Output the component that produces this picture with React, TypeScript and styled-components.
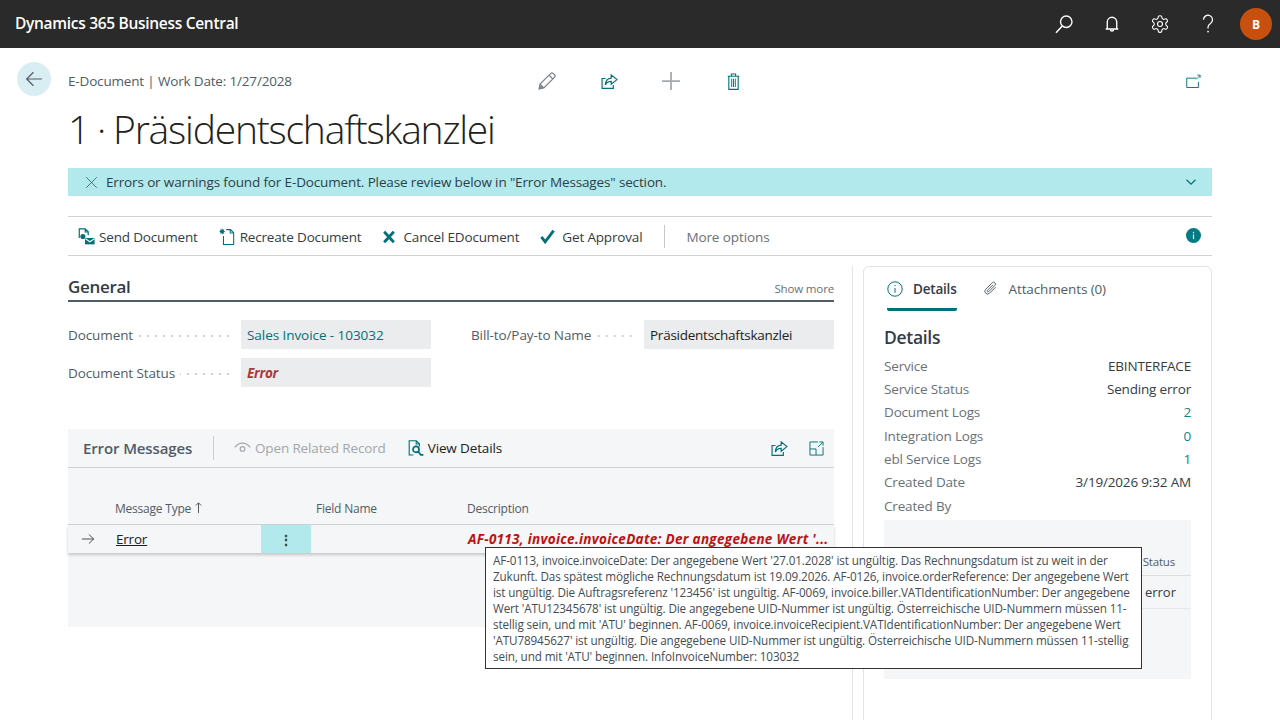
import React from 'react';
import styled, { createGlobalStyle } from 'styled-components';

const GlobalStyle = createGlobalStyle`
  html, body {
    margin: 0;
    padding: 0;
    background: #fff;
    overflow: hidden;
  }
  body {
    font-family: 'Open Sans', 'Noto Sans', sans-serif;
    font-size: 14px;
    color: #212121;
  }
`;

const teal = '#00707a';
const lightTeal = '#0a858f';

const Shell = styled.div`
  width: 1280px;
  height: 720px;
  overflow: hidden;
`;

const TopBar = styled.header`
  height: 48px;
  background: #2a2a2a;
  display: flex;
  align-items: center;
  padding-left: 15px;
  color: #fff;
`;

const Brand = styled.div`
  font-size: 15.5px;
  font-weight: 600;
  letter-spacing: -0.3px;
  flex: 1;
  padding-bottom: 3px;
`;

const TopIcon = styled.div`
  width: 48px;
  height: 48px;
  display: flex;
  align-items: center;
  justify-content: center;
`;

const Avatar = styled.div`
  width: 32px;
  height: 32px;
  border-radius: 50%;
  background: #c8500f;
  color: #fff;
  font-size: 12px;
  font-weight: 700;
  display: flex;
  align-items: center;
  justify-content: center;
  margin: 0 8px;
`;

const Page = styled.div`
  display: grid;
  grid-template-columns: 68px 1144px;
`;

const BackButton = styled.div`
  width: 34px;
  height: 34px;
  border-radius: 50%;
  background: #d9eef3;
  margin: 14px 0 0 17px;
  display: flex;
  align-items: center;
  justify-content: center;
`;

const Main = styled.main`
  min-width: 0;
`;

const CaptionRow = styled.div`
  display: flex;
  align-items: center;
  height: 34px;
  margin-top: 16px;
`;

const Caption = styled.div`
  width: 448px;
  font-size: 13.5px;
  letter-spacing: -0.17px;
  color: #505c6a;
`;

const CaptionIcon = styled.div<{ $end?: boolean }>`
  width: ${p => (p.$end ? 38 : 62)}px;
  display: flex;
  justify-content: center;
  margin-left: ${p => (p.$end ? 'auto' : 0)};
`;

const Title = styled.h1`
  margin: 5px 0 0;
  font-size: 39px;
  line-height: 52px;
  font-weight: 300;
  letter-spacing: -1.2px;
  word-spacing: -1px;
  color: #212121;
`;

const Banner = styled.div`
  margin-top: 13px;
  height: 28px;
  background: #b2e9ec;
  display: flex;
  align-items: center;
  padding: 0 15px 0 17px;
  gap: 8px;
  font-size: 13.5px;
  letter-spacing: -0.14px;
  color: #2f3e48;
`;

const BannerText = styled.span`
  flex: 1;
`;

const ActionBar = styled.div`
  margin-top: 20px;
  height: 40px;
  box-sizing: border-box;
  border-top: 1px solid #d0d2d5;
  border-bottom: 1px solid #d0d2d5;
  display: flex;
  align-items: center;
  padding: 0 10px;
`;

const ActionItem = styled.div<{ $gap?: number }>`
  display: flex;
  align-items: center;
  gap: ${p => p.$gap ?? 4}px;
  margin-right: 21px;
  font-size: 13.5px;
  letter-spacing: -0.17px;
  color: #333c46;
  line-height: 18px;
  padding-top: 1px;
`;

const ActionDivider = styled.div`
  width: 1px;
  height: 23px;
  background: #c4c7ca;
  margin-left: 1px;
  margin-right: 21px;
`;

const MoreOptions = styled.div`
  flex: 1;
  font-size: 13.5px;
  letter-spacing: -0.1px;
  color: #68717c;
  padding-top: 1px;
`;

const Content = styled.div`
  display: flex;
  margin-top: 10px;
  height: 454px;
`;

const LeftColumn = styled.div`
  width: 785px;
  box-sizing: border-box;
  border-right: 1px solid #e1e3e6;
  padding-right: 18px;
`;

const SectionHead = styled.div`
  margin-top: 10px;
  height: 24px;
  box-sizing: content-box;
  border-bottom: 2px solid #505c6a;
  display: flex;
  align-items: center;
  justify-content: space-between;
`;

const SectionTitle = styled.h2`
  margin: 0 0 3px;
  font-size: 17px;
  font-weight: 600;
  letter-spacing: -0.3px;
  color: #333c46;
`;

const ShowMore = styled.span`
  font-size: 11.5px;
  letter-spacing: -0.15px;
  color: #68717c;
`;

const FieldGrid = styled.div`
  display: grid;
  grid-template-columns: 363px 363px;
  column-gap: 40px;
  row-gap: 9px;
  margin-top: 18px;
`;

const Field = styled.div`
  display: flex;
  align-items: center;
  height: 29px;
`;

const FieldLabel = styled.span`
  font-size: 13.5px;
  letter-spacing: -0.1px;
  color: #505c6a;
  white-space: nowrap;
`;

const Dots = styled.span`
  flex: 1;
  height: 2px;
  margin: 2px 9px 0 5px;
  background-image: radial-gradient(circle, #d0d3d6 1px, transparent 1px);
  background-size: 8px 2px;
  background-position: right;
`;

const FieldValue = styled.div<{ $tone?: 'link' | 'error' }>`
  width: 190px;
  height: 29px;
  box-sizing: border-box;
  background: #ebecee;
  padding: 0 6px;
  display: flex;
  align-items: center;
  font-size: 13.5px;
  letter-spacing: ${p => (p.$tone === 'link' ? -0.06 : -0.25)}px;
  color: ${p => (p.$tone === 'link' ? teal : p.$tone === 'error' ? '#a83a3a' : '#212121')};
  font-weight: ${p => (p.$tone === 'error' ? 700 : 400)};
  font-style: ${p => (p.$tone === 'error' ? 'italic' : 'normal')};
`;

const ErrorPart = styled.section`
  margin-top: 42px;
  background: #f5f6f7;
  height: 198px;
`;

const PartBar = styled.div`
  height: 39px;
  box-sizing: border-box;
  border-bottom: 1px solid #cfd1d4;
  display: flex;
  align-items: center;
  padding-left: 15px;
`;

const PartTitle = styled.h3`
  margin: 0;
  width: 130px;
  font-size: 15px;
  font-weight: 600;
  letter-spacing: -0.12px;
  color: #505c6a;
`;

const PartDivider = styled.div`
  width: 1px;
  height: 24px;
  background: #ccced1;
  margin-right: 20px;
`;

const PartAction = styled.div<{ $disabled?: boolean }>`
  display: flex;
  align-items: center;
  gap: 4px;
  margin-right: 22px;
  font-size: 13.5px;
  letter-spacing: -0.14px;
  color: ${p => (p.$disabled ? '#a3a7ac' : '#212121')};
`;

const PartIcons = styled.div`
  margin-left: auto;
  display: flex;
  align-items: center;
  gap: 21px;
  padding-right: 10px;
`;

const TableRow = styled.div<{ $head?: boolean }>`
  display: grid;
  grid-template-columns: 47px 146px 50px 156px 1fr;
  position: relative;
  height: ${p => (p.$head ? 57 : 28)}px;
  box-sizing: border-box;
  align-items: ${p => (p.$head ? 'end' : 'center')};
  ${p => (p.$head ? 'border-bottom: 1px solid #cfd1d4; padding-bottom: 7px;' : 'box-shadow: 0 2px 3px rgba(0,0,0,0.2);')}
`;

const HeadCell = styled.div<{ $inset?: number }>`
  font-size: 12px;
  letter-spacing: -0.22px;
  color: #505c6a;
  padding-left: ${p => p.$inset ?? 0}px;
  white-space: nowrap;
`;

const ArrowCell = styled.div`
  display: flex;
  justify-content: center;
  padding-right: 7px;
`;

const TypeCell = styled.div`
  padding-left: 1px;
  font-size: 13.5px;
  letter-spacing: -0.2px;
  text-decoration: underline;
  color: #212121;
`;

const MenuCell = styled.div`
  height: 28px;
  background: #b2e9ec;
  display: flex;
  align-items: center;
  justify-content: center;
  font-weight: 700;
  color: #333c46;
`;

const DescCell = styled.div`
  grid-column: 5;
  font-size: 13.5px;
  font-weight: 700;
  font-style: italic;
  letter-spacing: 0.3px;
  color: #c01010;
  white-space: nowrap;
  padding-left: 1px;
`;

const Tooltip = styled.div`
  position: absolute;
  left: 417px;
  top: 22px;
  width: 657px;
  height: 122px;
  box-sizing: border-box;
  background: #fff;
  border: 1px solid #333;
  padding: 4px 7px;
  font-size: 11.7px;
  line-height: 16px;
  letter-spacing: -0.12px;
  color: #444c55;
  z-index: 10;
`;

const TooltipLine = styled.div`
  white-space: nowrap;
`;

const SideCard = styled.aside`
  margin-left: 10px;
  width: 349px;
  height: 470px;
  box-sizing: border-box;
  border: 1px solid #e1e3e6;
  border-radius: 6px 6px 0 0;
  padding: 0 20px;
`;

const Tabs = styled.div`
  display: flex;
  gap: 26px;
  padding-left: 3px;
`;

const Tab = styled.div<{ $active?: boolean }>`
  height: 44px;
  box-sizing: border-box;
  padding-top: 2px;
  display: flex;
  align-items: center;
  gap: ${p => (p.$active ? 10 : 11)}px;
  font-size: 13.5px;
  letter-spacing: ${p => (p.$active ? -0.2 : -0.12)}px;
  font-weight: ${p => (p.$active ? 600 : 400)};
  color: ${p => (p.$active ? '#333c46' : '#505c6a')};
  border-bottom: 3px solid ${p => (p.$active ? teal : 'transparent')};
  border-radius: 0 0 2px 2px;
`;

const DetailsTitle = styled.h2`
  margin: 14px 0 5px;
  font-size: 17.5px;
  line-height: 24px;
  font-weight: 600;
  letter-spacing: -0.3px;
  color: #333c46;
`;

const DetailRow = styled.div`
  display: flex;
  justify-content: space-between;
  align-items: center;
  height: 23.33px;
  font-size: 13.5px;
  letter-spacing: -0.17px;
`;

const DetailLabel = styled.span`
  color: #68717c;
`;

const DetailValue = styled.span<{ $link?: boolean }>`
  color: ${p => (p.$link ? lightTeal : '#333c46')};
`;

const LogBox = styled.div`
  margin-top: 3px;
  height: 159px;
  background: #f5f6f7;
`;

const LogHead = styled.div`
  height: 56px;
  box-sizing: border-box;
  border-bottom: 1px solid #dcdee1;
  display: flex;
  align-items: flex-end;
  justify-content: flex-end;
  padding: 0 16px 6px 0;
  font-size: 11.5px;
  letter-spacing: -0.2px;
  color: #505c6a;
`;

const LogCell = styled.div`
  height: 33px;
  box-sizing: border-box;
  border-bottom: 1px solid #e6e7e9;
  display: flex;
  align-items: center;
  justify-content: flex-end;
  padding-right: 15px;
  font-size: 13px;
  color: #333c46;
`;

type IconProps = { color?: string; size?: number };

const Svg: React.FC<React.PropsWithChildren<IconProps>> = ({ children, size = 16, color = 'currentColor' }) => (
  <svg width={size} height={size} viewBox="0 0 16 16" fill="none" stroke={color} strokeWidth="1">
    {children}
  </svg>
);

const SearchIcon = () => (
  <Svg size={20} color="#fff">
    <circle cx="9.8" cy="6.2" r="4.6" strokeWidth="1.1" />
    <path d="M6.6 9.6 1.6 15" strokeWidth="1.2" />
  </Svg>
);

const BellIcon = () => (
  <Svg size={18} color="#fff">
    <path d="M3.8 12.4V6.2a4.2 4.2 0 0 1 8.4 0v6.2M2.4 12.4h11.2M6.6 12.8a1.4 1.4 0 0 0 2.8 0" strokeWidth="1.2" />
  </Svg>
);

const GearIcon = () => (
  <svg width="20" height="20" viewBox="0 0 24 24" fill="none" stroke="#fff" strokeWidth="1.3">
    <path d="M12.22 2h-.44a2 2 0 0 0-2 2v.18a2 2 0 0 1-1 1.73l-.43.25a2 2 0 0 1-2 0l-.15-.08a2 2 0 0 0-2.73.73l-.22.38a2 2 0 0 0 .73 2.73l.15.1a2 2 0 0 1 1 1.72v.51a2 2 0 0 1-1 1.74l-.15.09a2 2 0 0 0-.73 2.73l.22.38a2 2 0 0 0 2.73.73l.15-.08a2 2 0 0 1 2 0l.43.25a2 2 0 0 1 1 1.73V20a2 2 0 0 0 2 2h.44a2 2 0 0 0 2-2v-.18a2 2 0 0 1 1-1.73l.43-.25a2 2 0 0 1 2 0l.15.08a2 2 0 0 0 2.73-.73l.22-.39a2 2 0 0 0-.73-2.73l-.15-.08a2 2 0 0 1-1-1.74v-.5a2 2 0 0 1 1-1.74l.15-.09a2 2 0 0 0 .73-2.73l-.22-.38a2 2 0 0 0-2.73-.73l-.15.08a2 2 0 0 1-2 0l-.43-.25a2 2 0 0 1-1-1.73V4a2 2 0 0 0-2-2z" />
    <circle cx="12" cy="12" r="3" />
  </svg>
);

const HelpIcon = () => (
  <Svg size={20} color="#fff">
    <path d="M4.4 4.6a3.6 3.6 0 1 1 5.6 3c-1.3.9-2 1.5-2 3v.9" strokeWidth="1" />
    <circle cx="8" cy="14" r=".7" fill="#fff" stroke="none" />
  </Svg>
);

const BackIcon = () => (
  <Svg size={18} color="#505c6a">
    <path d="M15 8H1.5M7.5 2 1.5 8l6 6" strokeWidth="1.1" />
  </Svg>
);

const PencilIcon = () => (
  <Svg size={18} color="#7a828b">
    <path d="M11.2 1.4a1.7 1.7 0 0 1 2.4 0l1 1a1.7 1.7 0 0 1 0 2.4L5.2 14.2 1 15l.8-4.2zM9.8 2.8l3.4 3.4M1.8 10.8l3.4 3.4" strokeWidth="1.1" />
    <path d="M1.2 15l1-3.2 2.2 2.2z" fill="#7a828b" stroke="none" />
  </Svg>
);

const ShareIcon = ({ color = teal }: IconProps) => (
  <Svg size={17} color={color}>
    <path d="M11.6 11.2v3.3H1V5.2h3.2" strokeWidth="1.1" />
    <path d="M9.6 1.8 15 6.2l-5.4 4.4V7.9c-2.6 0-4.4 1-5.4 3.3 0-3.8 2-6.1 5.4-6.4z" strokeWidth="1.1" />
  </Svg>
);

const PlusIcon = () => (
  <Svg size={20} color="#a3a8ad">
    <path d="M8 .8v14.4M.8 8h14.4" strokeWidth="1.4" />
  </Svg>
);

const TrashIcon = () => (
  <Svg size={17} color={teal}>
    <path d="M2.6 3h10.8M6 3V1h4v2M3.6 3v12.4h8.8V3" strokeWidth="1.05" />
    <path d="M6.3 5.4v7.8M8 5.4v7.8M9.7 5.4v7.8" strokeWidth=".9" />
  </Svg>
);

const OpenIcon = () => (
  <Svg size={15} color={teal}>
    <path d="M11 4.4H.8v10h12.4V8.4" />
    <path d="M10.8 5.8 15 1.6M12 1.2h3v3" strokeWidth=".9" />
  </Svg>
);

const CloseIcon = ({ color = '#505c6a' }: IconProps) => (
  <Svg size={13} color={color}>
    <path d="M1.5 1.5l13 13M14.5 1.5l-13 13" strokeWidth="1.1" />
  </Svg>
);

const ChevronIcon = () => (
  <Svg size={12} color={teal}>
    <path d="M2 5l6 6 6-6" strokeWidth="1.6" />
  </Svg>
);

const SendIcon = () => (
  <Svg size={17} color={teal}>
    <path d="M1.2 9.5V.8h5.6l2.8 2.8v3.2M6.8.8v3h2.8" strokeWidth="1.1" />
    <circle cx="4.6" cy="8" r="2.4" fill={teal} stroke="none" />
    <rect x="6.6" y="9.4" width="9" height="6" fill={teal} stroke="none" />
    <path d="M6.8 10l4.4 3 4.4-3" stroke="#fff" />
  </Svg>
);

const RecreateIcon = () => (
  <Svg size={17} color={teal}>
    <path d="M6.8 1.5h4l3 3v11H4.2V7.5" />
    <path d="M10.6 1.5v3.2h3.2" />
    <path d="M3 .8v5M.6 3.3h4.8M1.2 1.5l3.6 3.6M4.8 1.5 1.2 5.1" strokeWidth="1" />
  </Svg>
);

const CancelIcon = () => (
  <Svg size={14} color={teal}>
    <path d="M2.5 2l11 12M13.5 2l-11 12" strokeWidth="3.2" />
  </Svg>
);

const CheckIcon = () => (
  <Svg size={15} color={teal}>
    <path d="M1.5 8.5l4 5.2L14.5 1.8" strokeWidth="3" />
  </Svg>
);

const InfoBadge = () => (
  <svg width="15" height="15" viewBox="0 0 15 15" style={{ marginTop: -2, marginRight: 1 }}>
    <circle cx="7.5" cy="7.5" r="7.5" fill="#007a85" />
    <rect x="6.9" y="6.5" width="1.2" height="4.6" fill="#fff" />
    <rect x="6.9" y="3.9" width="1.2" height="1.4" fill="#fff" />
  </svg>
);

const EyeIcon = () => (
  <Svg size={17} color="#a3a7ac">
    <path d="M.8 7C2.6 4.4 5.2 3 8 3s5.4 1.4 7.2 4" strokeWidth="1.1" />
    <circle cx="8" cy="8.4" r="2.2" strokeWidth="1.1" />
  </Svg>
);

const ViewDetailsIcon = () => (
  <Svg size={16} color={teal}>
    <path d="M5.4 15H1.2V.8h7.2l3 3V6.4M8.2.8v3.2h3.2" strokeWidth="1.1" />
    <circle cx="8" cy="9.4" r="3" strokeWidth="1.7" />
    <path d="M10.2 11.8l2.6 3h2.6" strokeWidth="1.7" />
  </Svg>
);

const ExpandIcon = () => (
  <Svg size={15} color={teal}>
    <path d="M9.5 1H1v14h14V6.5M1 8.5h6.5V15" />
    <path d="M9.5 6.5l5-5M11 1h4v4" />
  </Svg>
);

const RowArrow = () => (
  <Svg size={14} color="#333c46">
    <path d="M1 8h13.5M9 2.8 14.5 8 9 13.2" />
  </Svg>
);

const SortArrow = () => (
  <svg width="7" height="11" viewBox="0 0 7 11" fill="none" stroke="#505c6a" style={{ marginLeft: 4 }}>
    <path d="M3.5 11V1M.8 3.5l2.7-2.7 2.7 2.7" />
  </svg>
);

const DetailsTabIcon = () => (
  <Svg size={16} color={teal}>
    <circle cx="8" cy="8" r="7.2" />
    <path d="M8 7v4.8" />
    <circle cx="8" cy="4.6" r=".7" fill={teal} stroke="none" />
  </Svg>
);

const ClipIcon = () => (
  <Svg size={15} color="#505c6a">
    <path d="M13.4 6.6 7 13a2.9 2.9 0 0 1-4.2-4.1l7-7a2 2 0 0 1 2.9 2.8l-6.8 6.8a1 1 0 0 1-1.4-1.4L10.8 4" />
  </Svg>
);

const tooltipLines = [
  "AF-0113, invoice.invoiceDate: Der angegebene Wert '27.01.2028' ist ungültig. Das Rechnungsdatum ist zu weit in der",
  'Zukunft. Das spätest mögliche Rechnungsdatum ist 19.09.2026. AF-0126, invoice.orderReference: Der angegebene Wert',
  "ist ungültig. Die Auftragsreferenz '123456' ist ungültig. AF-0069, invoice.biller.VATIdentificationNumber: Der angegebene",
  "Wert 'ATU12345678' ist ungültig. Die angegebene UID-Nummer ist ungültig. Österreichische UID-Nummern müssen 11-",
  "stellig sein, und mit 'ATU' beginnen. AF-0069, invoice.invoiceRecipient.VATIdentificationNumber: Der angegebene Wert",
  "'ATU78945627' ist ungültig. Die angegebene UID-Nummer ist ungültig. Österreichische UID-Nummern müssen 11-stellig",
  "sein, und mit 'ATU' beginnen. InfoInvoiceNumber: 103032",
];

const details: { label: string; value?: string; link?: boolean }[] = [
  { label: 'Service', value: 'EBINTERFACE' },
  { label: 'Service Status', value: 'Sending error' },
  { label: 'Document Logs', value: '2', link: true },
  { label: 'Integration Logs', value: '0', link: true },
  { label: 'ebl Service Logs', value: '1', link: true },
  { label: 'Created Date', value: '3/19/2026 9:32 AM' },
  { label: 'Created By' },
];

export default function App() {
  return (
    <Shell>
      <GlobalStyle />
      <TopBar>
        <Brand>Dynamics 365 Business Central</Brand>
        <TopIcon><SearchIcon /></TopIcon>
        <TopIcon><BellIcon /></TopIcon>
        <TopIcon><GearIcon /></TopIcon>
        <TopIcon><HelpIcon /></TopIcon>
        <Avatar>B</Avatar>
      </TopBar>
      <Page>
        <div>
          <BackButton><BackIcon /></BackButton>
        </div>
        <Main>
          <CaptionRow>
            <Caption>E-Document | Work Date: 1/27/2028</Caption>
            <CaptionIcon><PencilIcon /></CaptionIcon>
            <CaptionIcon><ShareIcon /></CaptionIcon>
            <CaptionIcon><PlusIcon /></CaptionIcon>
            <CaptionIcon><TrashIcon /></CaptionIcon>
            <CaptionIcon $end><OpenIcon /></CaptionIcon>
          </CaptionRow>
          <Title>1 · Präsidentschaftskanzlei</Title>
          <Banner>
            <CloseIcon />
            <BannerText>Errors or warnings found for E-Document. Please review below in "Error Messages" section.</BannerText>
            <ChevronIcon />
          </Banner>
          <ActionBar>
            <ActionItem><SendIcon />Send Document</ActionItem>
            <ActionItem><RecreateIcon />Recreate Document</ActionItem>
            <ActionItem $gap={7}><CancelIcon />Cancel EDocument</ActionItem>
            <ActionItem $gap={7}><CheckIcon />Get Approval</ActionItem>
            <ActionDivider />
            <MoreOptions>More options</MoreOptions>
            <InfoBadge />
          </ActionBar>
          <Content>
            <LeftColumn>
              <SectionHead>
                <SectionTitle>General</SectionTitle>
                <ShowMore>Show more</ShowMore>
              </SectionHead>
              <FieldGrid>
                <Field>
                  <FieldLabel>Document</FieldLabel>
                  <Dots />
                  <FieldValue $tone="link">Sales Invoice - 103032</FieldValue>
                </Field>
                <Field>
                  <FieldLabel>Bill-to/Pay-to Name</FieldLabel>
                  <Dots />
                  <FieldValue>Präsidentschaftskanzlei</FieldValue>
                </Field>
                <Field>
                  <FieldLabel>Document Status</FieldLabel>
                  <Dots />
                  <FieldValue $tone="error">Error</FieldValue>
                </Field>
              </FieldGrid>
              <ErrorPart>
                <PartBar>
                  <PartTitle>Error Messages</PartTitle>
                  <PartDivider />
                  <PartAction $disabled><EyeIcon />Open Related Record</PartAction>
                  <PartAction><ViewDetailsIcon />View Details</PartAction>
                  <PartIcons>
                    <ShareIcon />
                    <ExpandIcon />
                  </PartIcons>
                </PartBar>
                <TableRow $head>
                  <span />
                  <HeadCell>Message Type<SortArrow /></HeadCell>
                  <span />
                  <HeadCell $inset={5}>Field Name</HeadCell>
                  <HeadCell>Description</HeadCell>
                </TableRow>
                <TableRow>
                  <ArrowCell><RowArrow /></ArrowCell>
                  <TypeCell>Error</TypeCell>
                  <MenuCell>⋮</MenuCell>
                  <DescCell>AF-0113, invoice.invoiceDate: Der angegebene Wert '...</DescCell>
                  <Tooltip>
                    {tooltipLines.map(line => (
                      <TooltipLine key={line}>{line}</TooltipLine>
                    ))}
                  </Tooltip>
                </TableRow>
              </ErrorPart>
            </LeftColumn>
            <SideCard>
              <Tabs>
                <Tab $active><DetailsTabIcon />Details</Tab>
                <Tab><ClipIcon />Attachments (0)</Tab>
              </Tabs>
              <DetailsTitle>Details</DetailsTitle>
              {details.map(row => (
                <DetailRow key={row.label}>
                  <DetailLabel>{row.label}</DetailLabel>
                  {row.value && <DetailValue $link={row.link}>{row.value}</DetailValue>}
                </DetailRow>
              ))}
              <LogBox>
                <LogHead>Status</LogHead>
                <LogCell>error</LogCell>
              </LogBox>
            </SideCard>
          </Content>
        </Main>
      </Page>
    </Shell>
  );
}
